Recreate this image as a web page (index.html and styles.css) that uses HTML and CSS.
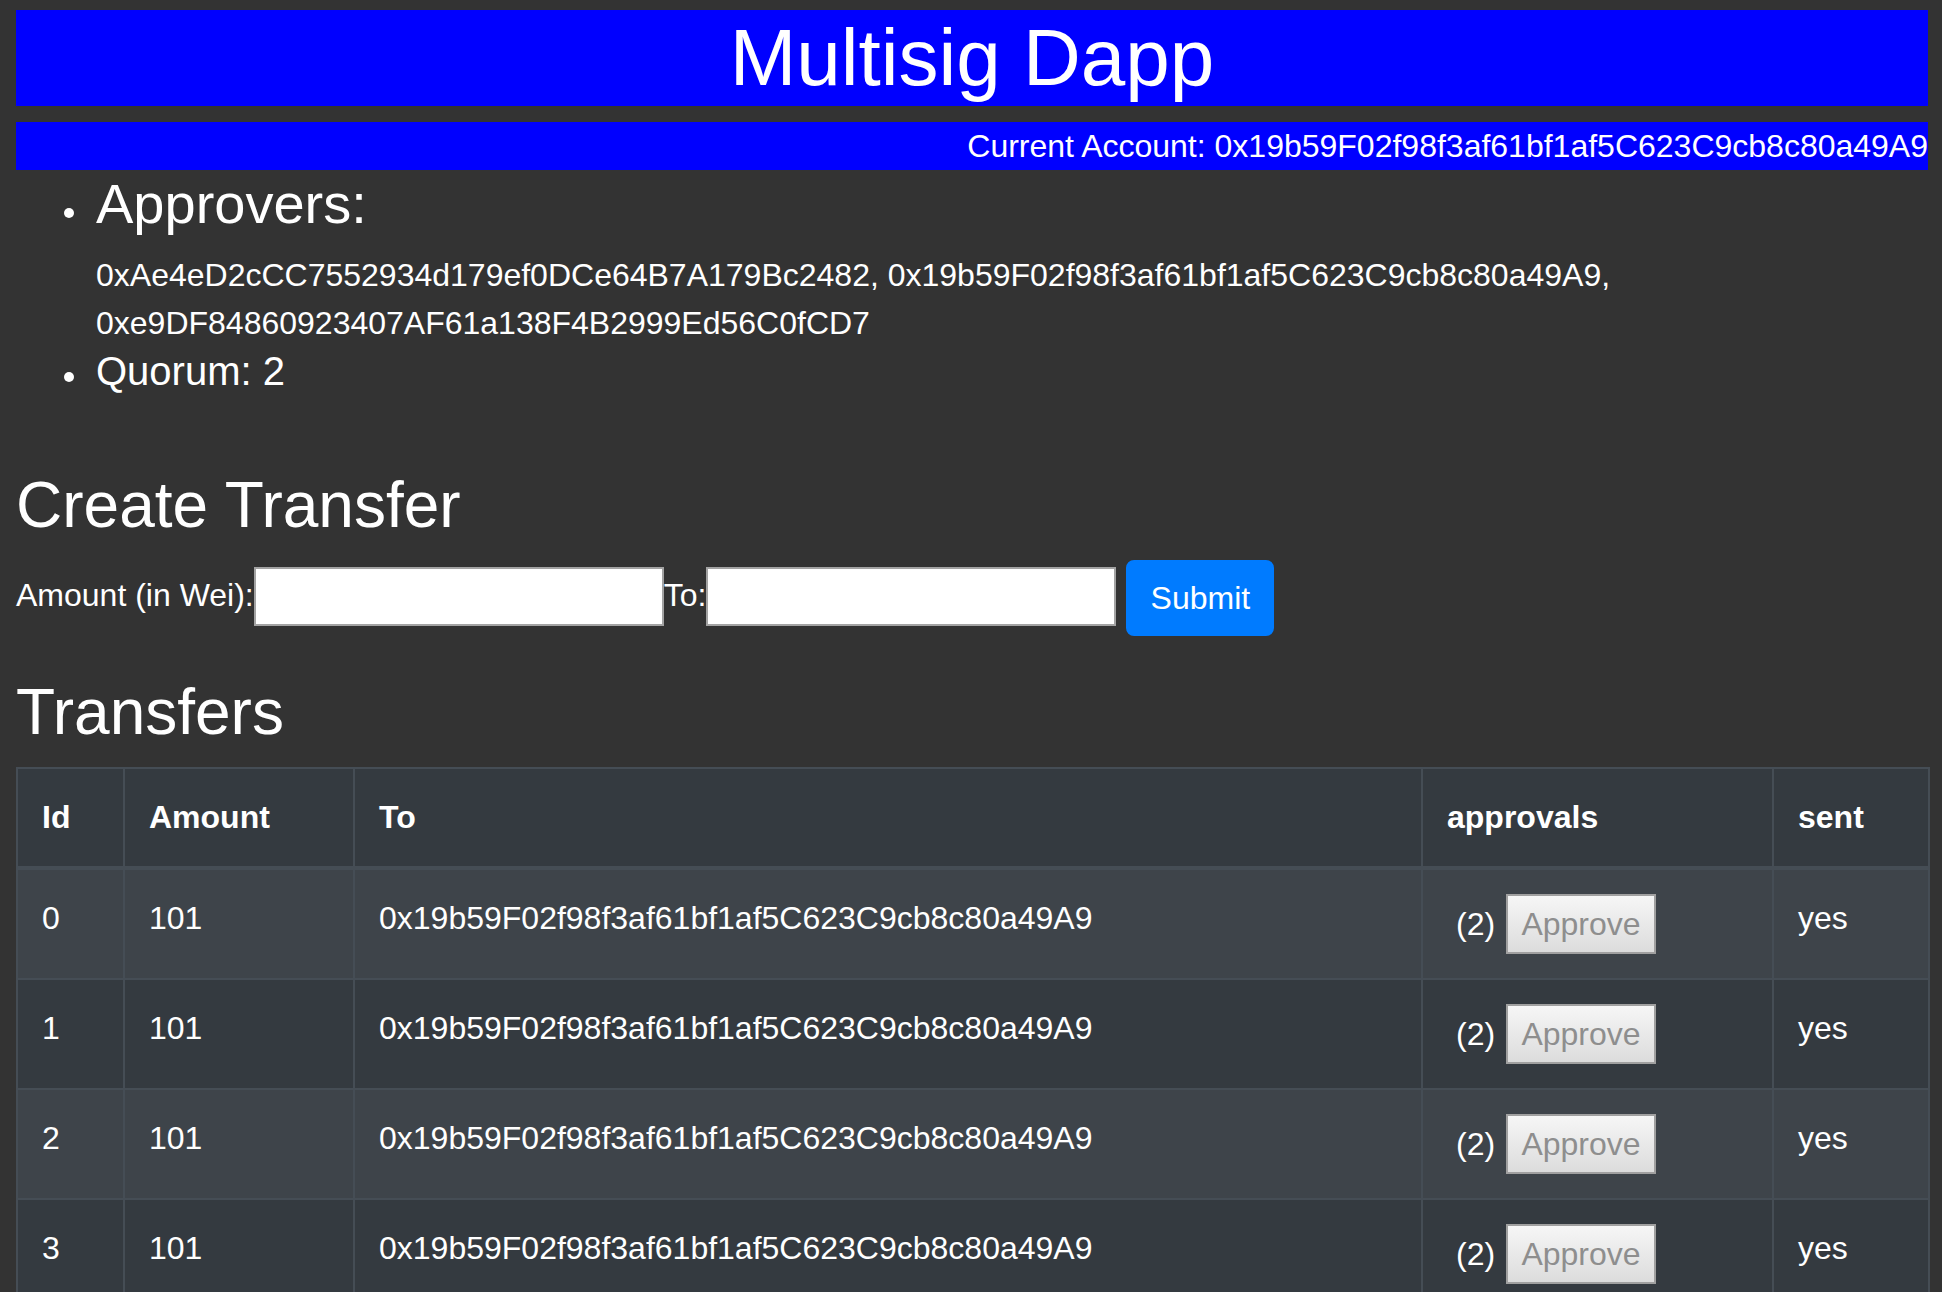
FILE: index.html
```html
<!DOCTYPE html>
<html lang="en">
<head>
<meta charset="utf-8">
<title>Multisig Dapp</title>
<link rel="stylesheet" href="styles.css">
</head>
<body>
<div class="page">
  <h1 class="title">Multisig Dapp</h1>
  <div class="account">Current Account: 0x19b59F02f98f3af61bf1af5C623C9cb8c80a49A9</div>
  <ul class="info">
    <li class="info-item approvers-item">
      <h3 class="info-title">Approvers:</h3>
      <p class="addrs">0xAe4eD2cCC7552934d179ef0DCe64B7A179Bc2482, 0x19b59F02f98f3af61bf1af5C623C9cb8c80a49A9, 0xe9DF84860923407AF61a138F4B2999Ed56C0fCD7</p>
    </li>
    <li class="info-item quorum-item"><div class="quorum">Quorum: 2</div></li>
  </ul>

  <h2 class="section-title create-title">Create Transfer</h2>
  <form class="transfer-form">
    <label class="field-label" for="amount">Amount (in Wei):</label><input class="field-input" id="amount" type="text"><label class="field-label" for="to">To:</label><input class="field-input" id="to" type="text"><button class="submit-btn" type="button">Submit</button>
  </form>

  <h2 class="section-title transfers-title">Transfers</h2>
  <table class="transfers">
    <colgroup>
      <col class="c-id"><col class="c-amount"><col class="c-to"><col class="c-appr"><col class="c-sent">
    </colgroup>
    <thead>
      <tr><th>Id</th><th>Amount</th><th>To</th><th>approvals</th><th>sent</th></tr>
    </thead>
    <tbody>
      <tr><td>0</td><td>101</td><td>0x19b59F02f98f3af61bf1af5C623C9cb8c80a49A9</td><td><span class="count">(2)</span> <button class="approve-btn" type="button" disabled>Approve</button></td><td>yes</td></tr>
      <tr><td>1</td><td>101</td><td>0x19b59F02f98f3af61bf1af5C623C9cb8c80a49A9</td><td><span class="count">(2)</span> <button class="approve-btn" type="button" disabled>Approve</button></td><td>yes</td></tr>
      <tr><td>2</td><td>101</td><td>0x19b59F02f98f3af61bf1af5C623C9cb8c80a49A9</td><td><span class="count">(2)</span> <button class="approve-btn" type="button" disabled>Approve</button></td><td>yes</td></tr>
      <tr><td>3</td><td>101</td><td>0x19b59F02f98f3af61bf1af5C623C9cb8c80a49A9</td><td><span class="count">(2)</span> <button class="approve-btn" type="button" disabled>Approve</button></td><td>yes</td></tr>
    </tbody>
  </table>
</div>
</body>
</html>
```

FILE: styles.css
```css
html {
  overflow: hidden;
}

body {
  margin: 0;
  background: #333333;
  color: #ffffff;
  font-family: "Liberation Sans", Arial, sans-serif;
  font-size: 32px;
  line-height: 48px;
}

.page {
  padding: 10px 14px 0 16px;
}

.title {
  margin: 0;
  background: #0000ff;
  color: #ffffff;
  font-size: 80px;
  line-height: 96px;
  font-weight: normal;
  text-align: center;
}

.account {
  margin-top: 16px;
  background: #0000ff;
  height: 48px;
  text-align: right;
  white-space: nowrap;
}

.info {
  margin: 0;
  padding-left: 48px;
  list-style: none;
}

.info-item {
  display: grid;
  grid-template-columns: 32px 1fr;
}

.info-item::before {
  content: "";
  grid-column: 1;
  grid-row: 1;
  width: 10px;
  height: 10px;
  border-radius: 50%;
  background: #ffffff;
}

.approvers-item::before {
  margin-top: 38px;
}

.quorum-item::before {
  margin-top: 25px;
}

.info-item > * {
  grid-column: 2;
}

.info-title {
  grid-row: 1;
  margin: 0 0 14px;
  font-size: 56px;
  line-height: 67px;
  font-weight: normal;
}

.addrs {
  grid-row: 2;
  margin: 0;
}

.quorum {
  grid-row: 1;
  font-size: 40px;
  line-height: 48px;
}

.section-title {
  margin: 0 0 16px;
  font-size: 64px;
  line-height: 77px;
  font-weight: normal;
}

.create-title {
  margin-top: 72px;
}

.transfer-form {
  display: flex;
  align-items: flex-start;
  height: 76px;
  margin: 0;
}

.field-label {
  margin-top: 11px;
  white-space: nowrap;
}

.field-input {
  box-sizing: border-box;
  width: 410px;
  height: 59px;
  margin: 7px 0 0;
  border: 2px solid #a3a3a3;
  background: #ffffff;
  padding: 2px 4px;
  font: inherit;
}

.submit-btn {
  box-sizing: border-box;
  width: 148px;
  height: 76px;
  margin-left: 10px;
  padding: 0;
  border: 2px solid #007bff;
  border-radius: 8px;
  background: #007bff;
  color: #ffffff;
  font: inherit;
  line-height: 48px;
}

.transfers-title {
  margin-top: 38px;
}

.transfers {
  width: 1912px;
  table-layout: fixed;
  border-collapse: collapse;
  background: #343a40;
}

.c-id { width: 107px; }
.c-amount { width: 230px; }
.c-to { width: 1068px; }
.c-appr { width: 351px; }
.c-sent { width: 156px; }

.transfers th,
.transfers td {
  padding: 24px;
  border: 2px solid #454d55;
  text-align: left;
  vertical-align: top;
  white-space: nowrap;
}

.transfers thead th {
  padding-bottom: 25px;
  border-bottom-width: 4px;
  font-weight: bold;
  vertical-align: bottom;
}

.transfers tbody tr:nth-child(odd) {
  background: #3e444a;
}

.count {
  margin-left: 9px;
  margin-right: 2px;
}

.approve-btn {
  box-sizing: border-box;
  display: inline-block;
  width: 150px;
  height: 60px;
  padding: 0;
  border: 2px solid #a0a0a0;
  background: linear-gradient(#f6f6f6, #dcdcdc);
  color: #8e8e8e;
  font: inherit;
  line-height: 56px;
  vertical-align: baseline;
}
```
